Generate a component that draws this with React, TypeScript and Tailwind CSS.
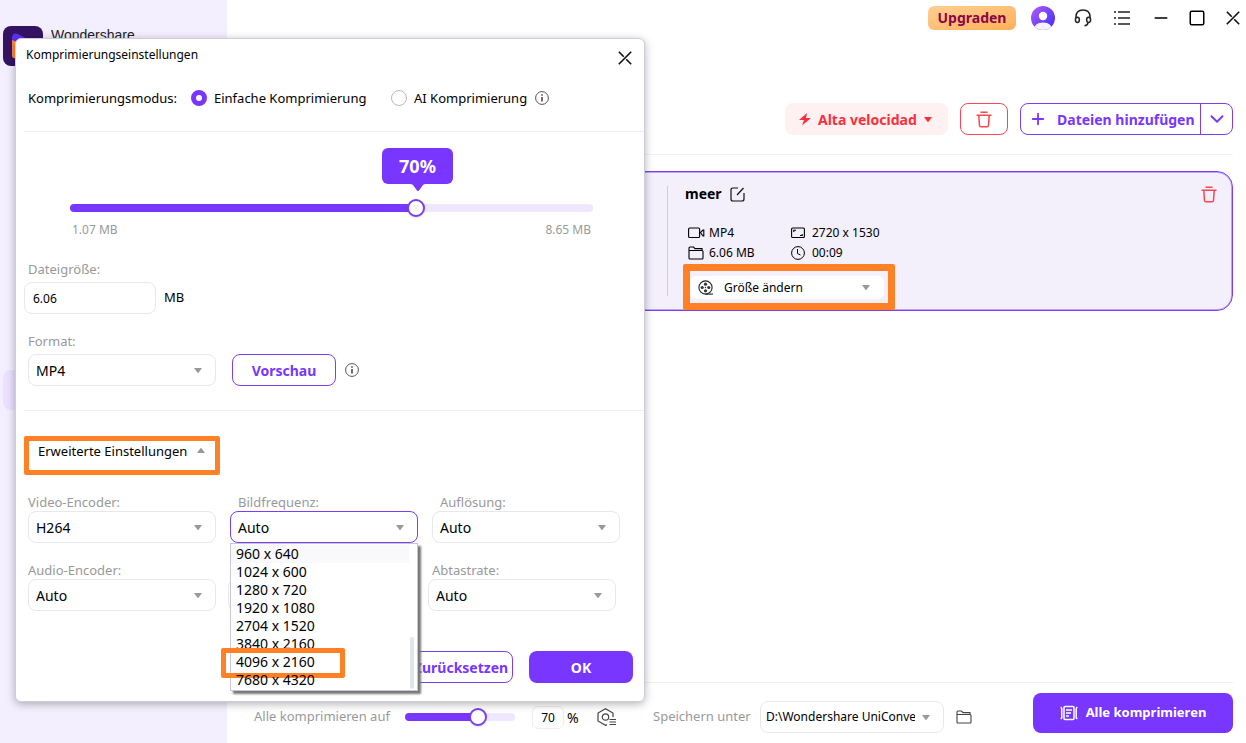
import { useState, type ReactNode } from 'react'
import { Minus, Plus, Square, ChevronDown } from 'lucide-react'

const sizes = [
  '960 x 640',
  '1024 x 600',
  '1280 x 720',
  '1920 x 1080',
  '2704 x 1520',
  '3840 x 2160',
  '4096 x 2160',
  '7680 x 4320',
]

const rangeClass =
  'block h-2 appearance-none rounded-full outline-none [&::-webkit-slider-thumb]:h-[18px] [&::-webkit-slider-thumb]:w-[18px] [&::-webkit-slider-thumb]:appearance-none [&::-webkit-slider-thumb]:rounded-full [&::-webkit-slider-thumb]:border-2 [&::-webkit-slider-thumb]:border-[#7b3ff2] [&::-webkit-slider-thumb]:bg-white [&::-webkit-slider-thumb]:shadow'

function Caret({ className = '' }: { className?: string }) {
  return (
    <svg viewBox="0 0 8 5" className={`h-[5px] w-2 ${className}`} fill="currentColor">
      <path d="M.5 0h7q.5 0 .2.5L4.5 4.7q-.5.5-1 0L.3.5Q0 0 .5 0z" />
    </svg>
  )
}

function CloseIcon() {
  return (
    <svg viewBox="0 0 14 14" className="h-3.5 w-3.5" fill="none" stroke="#111" strokeWidth="1.6">
      <path d="M.8.8l5 5M8.2 8.2l5 5M13.2.8L.8 13.2" />
    </svg>
  )
}

function TrashIcon() {
  return (
    <svg viewBox="0 0 16 17" className="h-[17px] w-4 text-[#fa4552]" fill="none" stroke="currentColor" strokeWidth="1.5">
      <path d="M4.5 1.2h7M.5 4.2h15" />
      <path d="M2.8 4.2L3.5 14.5Q3.6 15.8 4.9 15.8H11.1Q12.4 15.8 12.5 14.5L13.2 4.2" />
    </svg>
  )
}

function InfoIcon() {
  return (
    <svg viewBox="0 0 14 14" className="h-3.5 w-3.5 text-[#555]" fill="none" stroke="currentColor">
      <circle cx="7" cy="7" r="6.4" />
      <path d="M7 3.2v1.6M7 6v4.6" strokeWidth="1.7" />
    </svg>
  )
}

function FolderIcon({ className = '' }: { className?: string }) {
  return (
    <svg viewBox="0 0 16 14" className={className} fill="none" stroke="currentColor" strokeWidth="1.1">
      <path d="M1 4.5h13q1 0 1 1v6.5q0 1-1 1H2q-1 0-1-1V2q0-1 1-1h3.500L7 2.600h7v1.900" />
    </svg>
  )
}

type FieldProps = {
  id: string
  value: string
  label?: string
  labelClass?: string
  active?: boolean
  children?: ReactNode
}

function Field({ id, value, label, labelClass = 'h-[18px]', active, children }: FieldProps) {
  return (
    <div className="relative w-[188px]">
      <label htmlFor={id} className={`block text-[13px] leading-[18px] text-[#999] ${labelClass}`}>
        {label}
      </label>
      <div className="relative">
        <select
          id={id}
          aria-label={label ? undefined : id}
          className={`block h-8 w-full appearance-none rounded-lg border bg-white px-[7px] text-[14px] text-black outline-none ${
            active ? 'border-[#7b3ff2]' : 'border-[#e8e8ec]'
          }`}
        >
          <option>{value}</option>
        </select>
        <Caret className="pointer-events-none absolute top-3.5 right-3.5 text-[#999]" />
      </div>
      {children}
    </div>
  )
}

function SizeList() {
  return (
    <div className="absolute top-full left-0 z-10 h-[148px] w-full border border-[#c8c6d8] bg-white shadow-[3px_3px_2px_#777]">
      <ul className="pt-px text-[14px] leading-[18px] text-black">
        {sizes.map((size, i) => (
          <li key={size} className={`relative mr-2 h-[18px] pl-[5px] ${i === 0 ? 'bg-[#f9f9fc]' : ''}`}>
            {size}
            {size === '4096 x 2160' && (
              <span className="absolute -top-[5px] -left-2.5 h-[30px] w-[124px] rounded-xs border-5 border-[#ff8025]" />
            )}
          </li>
        ))}
      </ul>
      <div className="absolute right-[3px] bottom-px h-[52px] w-1 rounded-full bg-[#e2e4ee]" />
    </div>
  )
}

function Sidebar() {
  return (
    <aside className="w-[227px] shrink-0 bg-[#f3effe] pt-[26px] pl-[3px]">
      <div className="flex h-10 gap-2">
        <svg viewBox="0 0 40 40" className="h-10 w-10">
          <rect width="40" height="40" rx="8" fill="#351363" />
          <path d="M9 11v18q0 4 4 3l16-10z" fill="#ff8b3d" />
          <path d="M9 13q0-7 6-5l17 9q4 3 0 6L9 14z" fill="#5b2ff5" />
        </svg>
        <span className="font-['Liberation_Sans'] text-[14px] leading-[18px] text-[#222]">Wondershare</span>
      </div>
      <nav className="mt-[304px] mr-3">
        <a href="#" aria-label="Video" className="block h-10 rounded-lg bg-[#ebe0fe]" />
      </nav>
    </aside>
  )
}

function TopBar() {
  return (
    <header className="flex h-9 items-center justify-end pr-1.5">
      <button className="h-6 w-[88px] rounded-md bg-gradient-to-br from-[#ffcf94] to-[#ffb054] text-[14px] leading-6 font-bold text-[#8c0546]">
        Upgraden
      </button>
      <button aria-label="Konto" className="ml-[15px]">
        <svg viewBox="0 0 24 24" className="h-6 w-6">
          <defs>
            <linearGradient id="avatar" x1="0" y1="0" x2="1" y2="1">
              <stop offset="0" stopColor="#b45cf5" />
              <stop offset="1" stopColor="#3a2dfb" />
            </linearGradient>
            <clipPath id="round">
              <circle cx="12" cy="12" r="12" />
            </clipPath>
          </defs>
          <g clipPath="url(#round)">
            <rect width="24" height="24" fill="url(#avatar)" />
            <circle cx="12" cy="10" r="4.2" fill="#fff" />
            <path d="M3 24q0-7.500 9-7.500T21 24z" fill="#f5f2ff" />
          </g>
        </svg>
      </button>
      <button aria-label="Support" className="ml-[19px]">
        <svg viewBox="0 0 18 18" className="h-[18px] w-[18px]" fill="none" stroke="#222" strokeWidth="1.5">
          <path d="M2 9V8q0-7 7-7t7 7v1" />
          <ellipse cx="3.4" cy="10.8" rx="2" ry="2.6" />
          <ellipse cx="14.6" cy="10.8" rx="2" ry="2.6" />
          <path d="M14 14q-.5 2.500-3.500 2.800" />
        </svg>
      </button>
      <button aria-label="Menü" className="ml-[22px]">
        <svg viewBox="0 0 16 14" className="h-3.5 w-4" stroke="#222" strokeWidth="1.6">
          <path d="M4 1h12M4 7h12M4 13h12M0 1h2M0 7h2M0 13h2" />
        </svg>
      </button>
      <button aria-label="Minimieren" className="ml-[21px]">
        <Minus size={20} strokeWidth={1.8} />
      </button>
      <button aria-label="Maximieren" className="ml-[17px]">
        <Square size={18} strokeWidth={2} />
      </button>
      <button aria-label="Schließen" className="ml-5">
        <CloseIcon />
      </button>
    </header>
  )
}

function Toolbar() {
  return (
    <div className="mt-[67px] ml-5 flex justify-end gap-3 border-b border-[#f1f0f5] pb-[19px] text-[14px] font-bold">
      <button className="flex h-8 w-[163px] items-center rounded-lg bg-[#fff1f1] pl-3.5 text-[#fa2f3d]">
        <svg viewBox="0 0 12 14" className="h-3.5 w-3 shrink-0" fill="currentColor">
          <path d="M8 1L0 8h5l-2 5.500L12 6H7z" />
        </svg>
        <span className="ml-[7px] whitespace-nowrap">Alta velocidad</span>
        <Caret className="mr-4 ml-auto shrink-0" />
      </button>
      <button aria-label="Löschen" className="flex h-8 w-12 items-center justify-center rounded-lg border border-[#fa4552]">
        <TrashIcon />
      </button>
      <div className="flex h-8 rounded-lg border border-[#7b3ff2] text-[#7836ff]">
        <button className="flex w-[179px] items-center gap-2.5 pl-2">
          <Plus size={18} strokeWidth={2.4} className="shrink-0" />
          <span className="whitespace-nowrap">Dateien hinzufügen</span>
        </button>
        <button aria-label="Weitere Optionen" className="flex w-8 items-center justify-center border-l border-[#7b3ff2]">
          <ChevronDown size={22} strokeWidth={2} />
        </button>
      </div>
    </div>
  )
}

function FileCard() {
  return (
    <article className="mt-4 ml-5 flex h-[140px] rounded-2xl border border-[#7b3ff2] bg-[#f3effb] shadow-[inset_0_0_0_1px_#c0a4f8]">
      <div className="w-[419px] shrink-0" />
      <div className="my-3.5 border-l border-[#d0ccda]" />
      <div className="relative flex-1 pt-3 pl-[17px]">
        <div className="flex items-center gap-2">
          <h2 className="text-[14px] leading-5 font-bold text-black">meer</h2>
          <button aria-label="Umbenennen">
            <svg viewBox="0 0 15 15" className="h-[15px] w-[15px]" fill="none" stroke="#111" strokeWidth="1.2">
              <path d="M8 1H3Q1 1 1 3v9q0 2 2 2h9q2 0 2-2V6M7 8l6.500-7" />
            </svg>
          </button>
        </div>
        <dl className="mt-[19px] ml-[3px] grid grid-cols-[103px_auto] text-[12px] leading-5 text-black">
          <div className="flex items-center gap-1">
            <svg viewBox="0 0 17 12" className="h-3 w-[17px]" fill="none" stroke="currentColor" strokeWidth="1.1">
              <rect x=".6" y="1" width="11" height="9.500" rx="1" />
              <path d="M12.500 5.500l2.500-2.500h.8v6H15z" />
            </svg>
            MP4
          </div>
          <div className="flex items-center gap-[7px]">
            <svg viewBox="0 0 14 12" className="h-3 w-3.5" fill="none" stroke="currentColor" strokeWidth="1.1">
              <rect x=".6" y="1" width="12.8" height="9.5" rx="1" />
              <path d="M2.800 5V3.200h2.200M11.200 7v1.500H9" />
            </svg>
            2720 x 1530
          </div>
          <div className="flex items-center gap-[5px]">
            <FolderIcon className="h-3.5 w-4" />
            6.06 MB
          </div>
          <div className="flex items-center gap-[7px]">
            <svg viewBox="0 0 14 14" className="h-3.5 w-3.5" fill="none" stroke="currentColor">
              <circle cx="7" cy="7" r="6.4" />
              <path d="M6.500 3v4.500l3 1.500" />
            </svg>
            00:09
          </div>
        </dl>
        <div className="absolute top-[92px] left-[15px] h-[46px] w-[212px] rounded-xs border-7 border-[#ff8025] pt-[5px] pr-1">
          <div className="relative">
            <svg viewBox="0 0 16 16" className="pointer-events-none absolute top-1 left-2 h-4 w-4" fill="none" stroke="#222" strokeWidth="1.1">
              <circle cx="7.500" cy="7.500" r="6.600" />
              <path d="M7.500 14.100H15" />
              <g fill="#333" stroke="none">
                <circle cx="7.500" cy="4.200" r="1.600" />
                <circle cx="7.500" cy="10.800" r="1.600" />
                <circle cx="4.200" cy="7.500" r="1.600" />
                <circle cx="10.800" cy="7.500" r="1.600" />
                <circle cx="7.500" cy="7.500" r=".7" />
              </g>
            </svg>
            <select aria-label="Größe ändern" className="block h-[23px] w-full appearance-none rounded-md bg-white pl-[34px] text-[12px] text-black">
              <option>Größe ändern</option>
            </select>
            <Caret className="pointer-events-none absolute top-[9px] right-3.5 text-[#999]" />
          </div>
        </div>
      </div>
      <button aria-label="Datei entfernen" className="mt-3.5 mr-[15px] self-start">
        <TrashIcon />
      </button>
    </article>
  )
}

function Footer() {
  const [percent, setPercent] = useState(70)
  return (
    <footer className="mt-auto flex h-[61px] items-center justify-between border-t border-[#eee] pl-[27px] text-[13px] text-[#999]">
      <div className="flex items-center pt-2">
        <label htmlFor="alle" className="w-[151px] whitespace-nowrap">Alle komprimieren auf</label>
        <input
          id="alle"
          type="range"
          value={percent}
          onChange={(e) => setPercent(Number(e.target.value))}
          className={`${rangeClass} w-[110px] bg-[linear-gradient(to_right,#7836ff_67%,#efe6ff_67%)]`}
        />
        <input
          aria-label="Prozent"
          value={percent}
          onChange={(e) => setPercent(Number(e.target.value) || 0)}
          className="ml-[17px] h-[23px] w-8 rounded-md border border-[#ededf0] text-center text-[12px] text-black"
        />
        <span className="ml-[3px] w-[13px] text-[14px] text-black">%</span>
        <button aria-label="Einstellungen" className="ml-[17px]">
          <svg viewBox="0 0 19 18" className="h-[18px] w-[19px]" fill="none" stroke="#444" strokeWidth="1.2">
            <path d="M10 16.600l-1.500.7L1 13V5l7.500-4.200L16 5v4" />
            <circle cx="8.500" cy="9" r="3.200" />
            <path d="M12.500 11.500H19M12.500 14H19M12.500 16.500H19" />
          </svg>
        </button>
        <label htmlFor="ziel" className="ml-[37px] w-[107px] whitespace-nowrap">Speichern unter</label>
        <div className="relative">
          <select
            id="ziel"
            className="block h-8 w-[184px] appearance-none overflow-hidden rounded-lg border border-[#e8e8ec] bg-white pr-7 pl-[5px] text-[12px] text-black"
          >
            <option>D:\Wondershare UniConverter</option>
          </select>
          <Caret className="pointer-events-none absolute top-3.5 right-3.5" />
        </div>
        <button aria-label="Ordner öffnen" className="ml-3 text-[#444]">
          <FolderIcon className="h-4 w-4" />
        </button>
      </div>
      <button className="flex h-10 w-[200px] items-center justify-center gap-2 rounded-lg bg-[#7836ff] text-[13px] font-bold text-white">
        <svg viewBox="0 0 18 16" className="h-4 w-[18px]" fill="none" stroke="#fff" strokeWidth="1.5">
          <rect x="4" y="1.500" width="10" height="13" rx="1" />
          <path d="M6 5h6M6 8h5M6 11h3M.8 2q1.500 1.500 1 3.500v5q.5 2-1 3.500M17.200 2q-1.500 1.500-1 3.500v5q-.5 2 1 3.500" />
        </svg>
        <span>Alle komprimieren</span>
      </button>
    </footer>
  )
}

function SettingsDialog() {
  const [rate, setRate] = useState(70)
  return (
    <div
      role="dialog"
      aria-labelledby="dialog-title"
      className="absolute top-[38px] left-[15px] z-20 w-[630px] rounded-md border border-[#cfccdc] bg-white pb-[18px] text-[13px] text-black shadow-[0_2px_8px_rgba(0,0,0,0.3)]"
    >
      <div className="flex items-start justify-between pt-2 pr-3 pl-2.5">
        <h1 id="dialog-title" className="text-[12px] leading-4">Komprimierungseinstellungen</h1>
        <button aria-label="Schließen" className="mt-1">
          <CloseIcon />
        </button>
      </div>

      <fieldset className="mt-[22px] ml-2 flex h-[45px] items-start border-b border-[#eee] pl-1 leading-[22px]">
        <legend className="float-left w-[163px]">Komprimierungsmodus:</legend>
        <label className="flex w-[200px] items-center gap-[7px]">
          <input
            type="radio"
            name="modus"
            defaultChecked
            className="h-4 w-4 appearance-none rounded-full border border-[#b9b6c6] checked:border-5 checked:border-[#7836ff]"
          />
          Einfache Komprimierung
        </label>
        <label className="flex items-center gap-[7px]">
          <input
            type="radio"
            name="modus"
            className="h-4 w-4 appearance-none rounded-full border border-[#b9b6c6] checked:border-5 checked:border-[#7836ff]"
          />
          AI Komprimierung
        </label>
        <button type="button" aria-label="Info" className="mt-1 ml-2">
          <InfoIcon />
        </button>
      </fieldset>

      <section className="ml-2 border-b border-[#eee] pb-6">
        <div className="relative mr-[51px] ml-[46px] pt-[72px]">
          <output
            htmlFor="rate"
            className="absolute top-4 left-[312px] flex h-9 w-[71px] items-center justify-center rounded-md bg-[#7836ff] text-[18px] font-bold text-white"
          >
            {rate}%
            <svg viewBox="0 0 16 8" className="absolute top-full left-7 h-2 w-4" fill="#7836ff">
              <path d="M0 0h16q-2 0-3 1L9 6.500q-1 1-2 0L3 1Q2 0 0 0z" />
            </svg>
          </output>
          <input
            id="rate"
            aria-label="Komprimierungsrate"
            type="range"
            min={10}
            max={100}
            value={rate}
            onChange={(e) => setRate(Number(e.target.value))}
            className={`${rangeClass} w-full bg-[linear-gradient(to_right,#7836ff_66%,#efe6ff_66%)]`}
          />
          <div className="mt-[9px] flex justify-between px-0.5 text-[12px] leading-[18px] text-[#999]">
            <span>1.07 MB</span>
            <span>8.65 MB</span>
          </div>
        </div>

        <label htmlFor="groesse" className="mt-[21px] ml-1 block leading-[18px] text-[#999]">Dateigröße:</label>
        <div className="mt-1 flex items-center gap-2">
          <input id="groesse" defaultValue="6.06" className="h-8 w-[132px] rounded-lg border border-[#e8e8ec] px-2 text-[12px]" />
          MB
        </div>

        <div className="mt-[18px] ml-1 flex items-end gap-4">
          <Field id="format" label="Format:" labelClass="h-[22px]" value="MP4" />
          <button className="h-8 w-[104px] rounded-lg border border-[#7b3ff2] text-[14px] font-bold text-[#7836ff]">Vorschau</button>
          <button aria-label="Info" className="mb-[9px] -ml-[7px]">
            <InfoIcon />
          </button>
        </div>
      </section>

      <button
        aria-expanded="true"
        className="mt-[25px] ml-2 flex h-[39px] w-[196px] items-start justify-between rounded-xs border-5 border-[#ff8025] pr-2.5 pl-[9px] leading-5"
      >
        <span className="whitespace-nowrap">Erweiterte Einstellungen</span>
        <Caret className="mt-[7px] rotate-180 text-[#999]" />
      </button>

      <div className="mt-[18px] ml-3 flex gap-3.5">
        <Field id="video" label="Video-Encoder:" value="H264" />
        <Field id="bild" label="Bildfrequenz:" labelClass="h-[18px] pl-2" value="Auto" active>
          <SizeList />
        </Field>
        <Field id="aufloesung" label="Auflösung:" labelClass="h-[18px] pl-2" value="Auto" />
      </div>
      <div className="mt-[18px] ml-3 flex gap-3">
        <Field id="audio" label="Audio-Encoder:" value="Auto" />
        <Field id="Kanal" value="Auto" />
        <Field id="abtastrate" label="Abtastrate:" labelClass="h-[18px] pl-1" value="Auto" />
      </div>

      <div className="mt-10 mr-[11px] flex justify-end gap-4 text-[14px] font-bold">
        <button className="h-8 w-[104px] rounded-lg border border-[#7b3ff2] text-[#7836ff]">Zurücksetzen</button>
        <button className="h-8 w-[104px] rounded-lg bg-[#7836ff] text-white">OK</button>
      </div>
    </div>
  )
}

export default function App() {
  return (
    <div className="relative flex min-h-screen overflow-hidden bg-white font-['Noto_Sans',sans-serif]">
      <Sidebar />
      <main className="flex min-w-0 flex-1 flex-col">
        <TopBar />
        <div className="flex flex-1 flex-col pr-[13px]">
          <Toolbar />
          <FileCard />
          <Footer />
        </div>
      </main>
      <SettingsDialog />
    </div>
  )
}
